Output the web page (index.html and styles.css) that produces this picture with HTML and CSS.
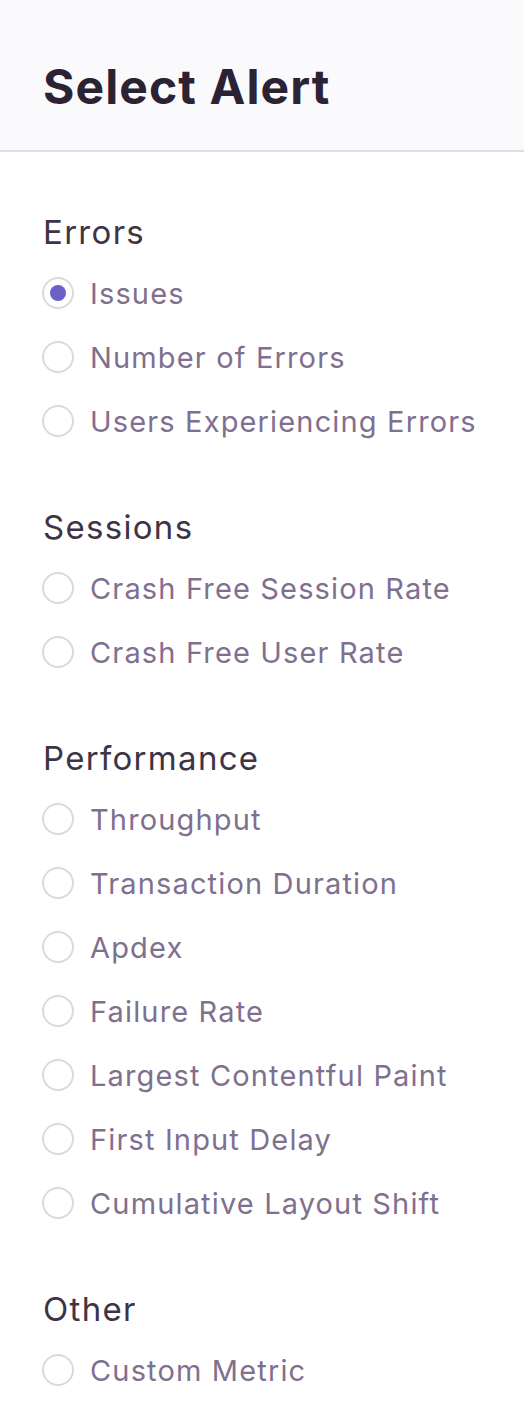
FILE: index.html
```html
<!DOCTYPE html>
<html>
<head>
<meta charset="utf-8">
<link rel="stylesheet" href="styles.css">
</head>
<body>
<header class="top">
  <h1 class="title">Select Alert</h1>
</header>
<main class="content">
  <section class="group">
    <h2 class="group-title">Errors</h2>
    <label class="opt"><span class="radio checked"></span><span class="opt-label">Issues</span></label>
    <label class="opt"><span class="radio"></span><span class="opt-label">Number of Errors</span></label>
    <label class="opt"><span class="radio"></span><span class="opt-label">Users Experiencing Errors</span></label>
  </section>
  <section class="group">
    <h2 class="group-title">Sessions</h2>
    <label class="opt"><span class="radio"></span><span class="opt-label">Crash Free Session Rate</span></label>
    <label class="opt"><span class="radio"></span><span class="opt-label">Crash Free User Rate</span></label>
  </section>
  <section class="group">
    <h2 class="group-title">Performance</h2>
    <label class="opt"><span class="radio"></span><span class="opt-label">Throughput</span></label>
    <label class="opt"><span class="radio"></span><span class="opt-label">Transaction Duration</span></label>
    <label class="opt"><span class="radio"></span><span class="opt-label">Apdex</span></label>
    <label class="opt"><span class="radio"></span><span class="opt-label">Failure Rate</span></label>
    <label class="opt"><span class="radio"></span><span class="opt-label">Largest Contentful Paint</span></label>
    <label class="opt"><span class="radio"></span><span class="opt-label">First Input Delay</span></label>
    <label class="opt"><span class="radio"></span><span class="opt-label">Cumulative Layout Shift</span></label>
  </section>
  <section class="group">
    <h2 class="group-title">Other</h2>
    <label class="opt"><span class="radio"></span><span class="opt-label">Custom Metric</span></label>
  </section>
</main>
</body>
</html>
```
FILE: styles.css
```css
html, body {
  margin: 0;
  padding: 0;
  background: #ffffff;
}
body {
  font-family: "Inter", "Noto Sans", sans-serif;
  color: #2b2233;
}
.top {
  height: 152px;
  box-sizing: border-box;
  padding: 24px 43px 0;
  display: flex;
  align-items: center;
  background: #faf9fb;
  border-bottom: 2px solid #e0dce5;
}
.title {
  margin: 0;
  font-size: 48px;
  font-weight: 700;
  line-height: 1;
  color: #2b2233;
  letter-spacing: 1.1px;
}
.content {
  padding: 51px 43px 0;
}
.group + .group {
  margin-top: 45px;
}
.group-title {
  margin: 0;
  height: 58px;
  display: flex;
  align-items: center;
  font-size: 33px;
  font-weight: 400;
  letter-spacing: 1.3px;
  color: #3e3446;
}
.opt {
  height: 64px;
  display: flex;
  align-items: center;
  gap: 16px;
}
.radio {
  width: 32px;
  height: 32px;
  box-sizing: border-box;
  border: 2px solid #dcd7e2;
  border-radius: 50%;
  background: #fff;
  display: flex;
  align-items: center;
  justify-content: center;
  flex: none;
  margin-left: -1px;
}
.radio.checked::after {
  content: "";
  width: 16px;
  height: 16px;
  border-radius: 50%;
  background: #6c5fc7;
}
.opt-label {
  font-size: 29px;
  letter-spacing: 1.15px;
  color: #80708f;
}
```
